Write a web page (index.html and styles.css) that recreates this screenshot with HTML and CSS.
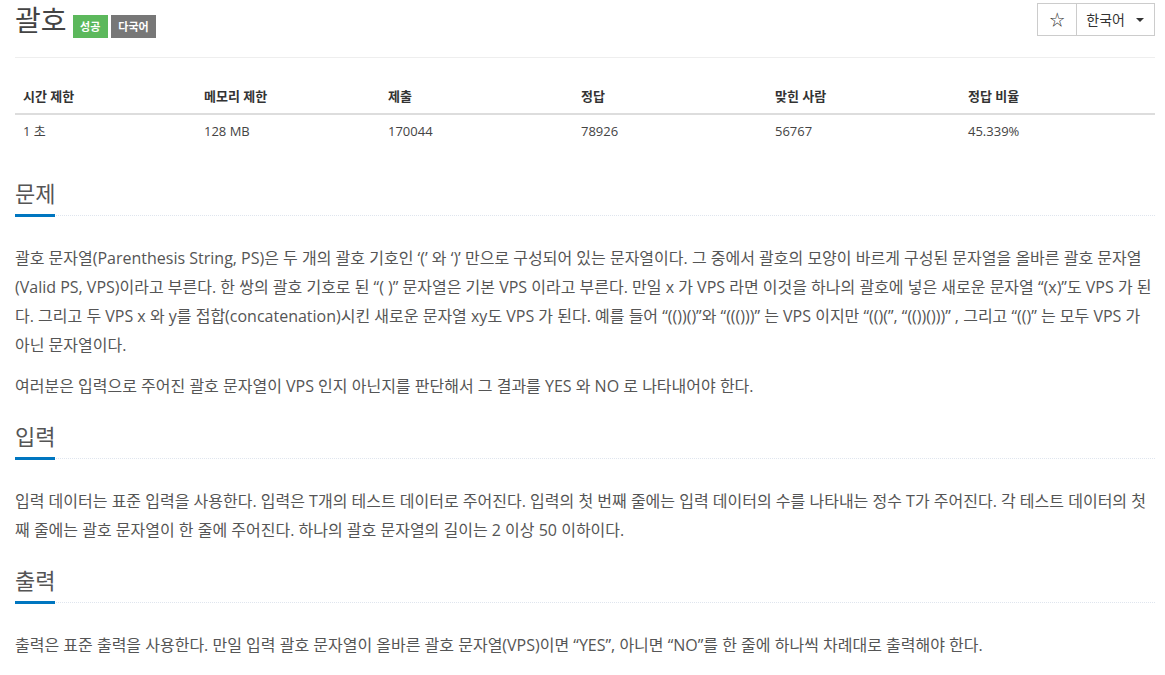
FILE: index.html
```html
<!DOCTYPE html>
<html lang="ko">
<head>
<meta charset="utf-8">
<title>괄호</title>
<link rel="stylesheet" href="styles.css">
</head>
<body>
<div class="page">
  <div class="page-header">
    <h1 class="title">괄호 <span class="label label-success">성공</span> <span class="label label-default">다국어</span></h1>
    <div class="btn-group">
      <button class="btn btn-star">☆</button>
      <button class="btn btn-lang">한국어 <span class="caret"></span></button>
    </div>
  </div>

  <table class="info-table">
    <thead>
      <tr><th>시간 제한</th><th>메모리 제한</th><th>제출</th><th>정답</th><th>맞힌 사람</th><th>정답 비율</th></tr>
    </thead>
    <tbody>
      <tr><td>1 초</td><td>128 MB</td><td>170044</td><td>78926</td><td>56767</td><td>45.339%</td></tr>
    </tbody>
  </table>

  <section class="problem-section">
    <div class="headline"><h2>문제</h2></div>
    <div class="problem-text">
      <p>괄호 문자열(Parenthesis String, PS)은 두 개의 괄호 기호인 ‘(’ 와 ‘)’ 만으로 구성되어 있는 문자열이다. 그 중에서 괄호의 모양이 바르게 구성된 문자열을 올바른 괄호 문자열(Valid PS, VPS)이라고 부른다. 한 쌍의 괄호 기호로 된 “( )” 문자열은 기본 VPS 이라고 부른다. 만일 x 가 VPS 라면 이것을 하나의 괄호에 넣은 새로운 문자열 “(x)”도 VPS 가 된다. 그리고 두 VPS x 와 y를 접합(concatenation)시킨 새로운 문자열 xy도 VPS 가 된다. 예를 들어 “(())()”와 “((()))” 는 VPS 이지만 “(()(”, “(())()))” , 그리고 “(()” 는 모두 VPS 가 아닌 문자열이다.</p>
      <p>여러분은 입력으로 주어진 괄호 문자열이 VPS 인지 아닌지를 판단해서 그 결과를 YES 와 NO 로 나타내어야 한다.</p>
    </div>
  </section>

  <section class="problem-section">
    <div class="headline"><h2>입력</h2></div>
    <div class="problem-text">
      <p>입력 데이터는 표준 입력을 사용한다. 입력은 T개의 테스트 데이터로 주어진다. 입력의 첫 번째 줄에는 입력 데이터의 수를 나타내는 정수 T가 주어진다. 각 테스트 데이터의 첫째 줄에는 괄호 문자열이 한 줄에 주어진다. 하나의 괄호 문자열의 길이는 2 이상 50 이하이다.</p>
    </div>
  </section>

  <section class="problem-section">
    <div class="headline"><h2>출력</h2></div>
    <div class="problem-text">
      <p>출력은 표준 출력을 사용한다. 만일 입력 괄호 문자열이 올바른 괄호 문자열(VPS)이면 “YES”, 아니면 “NO”를 한 줄에 하나씩 차례대로 출력해야 한다.</p>
    </div>
  </section>
</div>
</body>
</html>
```

FILE: styles.css
```css
* { box-sizing: border-box; }
html, body { margin: 0; padding: 0; background: #fff; }
body {
  font-family: "Open Sans", "Noto Sans CJK KR", sans-serif;
  font-size: 14px;
  color: #333;
}
.page { padding: 0 10px 0 15px; }

.page-header {
  display: flex;
  justify-content: space-between;
  align-items: flex-start;
  padding-top: 3px;
  padding-bottom: 19px;
  border-bottom: 1px solid #eee;
}
.title {
  margin: 2px 0 0 0;
  font-size: 28px;
  line-height: 31px;
  font-weight: 400;
  color: #444;
  display: flex;
  align-items: flex-start;
}
.label {
  display: inline-block;
  font-size: 11px;
  font-weight: 700;
  line-height: 11px;
  color: #fff;
  padding: 6px 7.5px;
  margin-top: 10px;
}
.label-success { background: #5cb85c; margin-left: 6px; }
.label-default { background: #777; margin-left: 3px; }

.btn-group { display: flex; }
.btn {
  font-family: "Open Sans", "Noto Sans CJK KR", sans-serif;
  font-size: 14px;
  color: #333;
  background: #fff;
  border: 1px solid #ccc;
  height: 33px;
  padding: 0 12px;
  margin: 0;
  line-height: 31px;
}
.btn-star { width: 40px; padding: 0; font-size: 15px; }
.btn-lang { margin-left: -1px; padding: 0 10px 0 9px; display: flex; align-items: center; }
.caret {
  display: inline-block;
  width: 0; height: 0;
  margin-left: 11px;
  border-top: 4px solid #333;
  border-left: 4px solid transparent;
  border-right: 4px solid transparent;
}

.info-table {
  width: 100%;
  border-collapse: collapse;
  margin-top: 22px;
  margin-bottom: 33px;
  font-size: 13px;
  table-layout: fixed;
}
.info-table th, .info-table td {
  text-align: left;
  padding: 8px;
  line-height: 17px;
}
.info-table th { font-weight: 700; color: #333; border-bottom: 2px solid #ddd; }
.info-table td { color: #444; }
.info-table th:nth-child(1) { width: 181px; }
.info-table th:nth-child(2) { width: 184px; }
.info-table th:nth-child(3) { width: 193px; }
.info-table th:nth-child(4) { width: 194px; }
.info-table th:nth-child(5) { width: 193px; }

.problem-section { margin-bottom: 23px; }
.headline {
  border-bottom: 1px dotted #dfe5ee;
  margin-bottom: 28px;
}
.headline h2 {
  display: inline-block;
  margin: 0 0 -2px 0;
  font-size: 22px;
  font-weight: 400;
  line-height: 24px;
  color: #555;
  padding-bottom: 9px;
  border-bottom: 3px solid #0076c0;
}
.problem-text { font-size: 16px; line-height: 29px; color: #555; }
.problem-text p { margin: 0 0 12px 0; }
```
